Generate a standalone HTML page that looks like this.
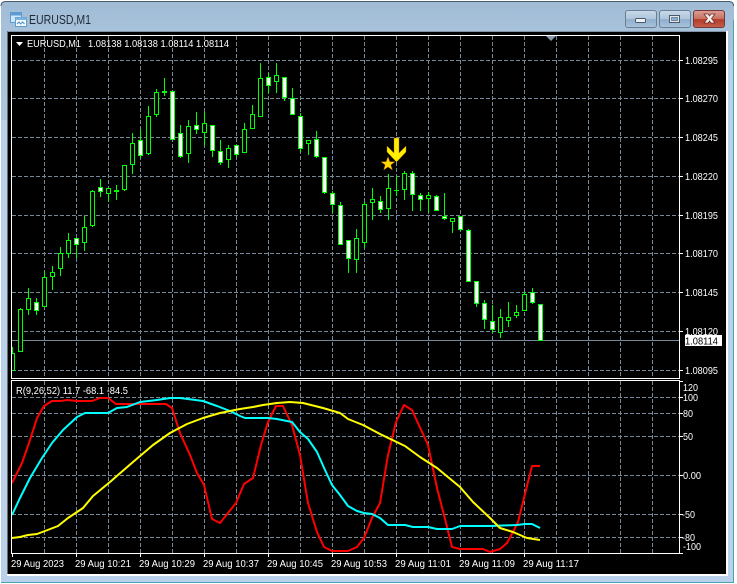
<!DOCTYPE html>
<html><head><meta charset="utf-8"><style>
html,body{margin:0;padding:0;background:#fff;width:737px;height:584px;overflow:hidden}
svg{display:block}
text{font-family:"Liberation Sans",sans-serif;font-size:10.500px;fill:#fff}
</style></head><body>
<svg width="737" height="584" viewBox="0 0 737 584" xmlns="http://www.w3.org/2000/svg">
<defs>
<linearGradient id="tb" x1="0" y1="0" x2="0" y2="1"><stop offset="0" stop-color="#a0bbd5"/><stop offset=".06" stop-color="#a9c3dc"/><stop offset="1" stop-color="#bad2ea"/></linearGradient>
<linearGradient id="b1" x1="0" y1="0" x2="0" y2="1"><stop offset="0" stop-color="#c9d9e9"/><stop offset=".5" stop-color="#aec5dc"/><stop offset=".52" stop-color="#8daecd"/><stop offset="1" stop-color="#a9c4dd"/></linearGradient>
<linearGradient id="b2" x1="0" y1="0" x2="0" y2="1"><stop offset="0" stop-color="#dca095"/><stop offset=".5" stop-color="#c9705f"/><stop offset=".52" stop-color="#b23a28"/><stop offset="1" stop-color="#c5604c"/></linearGradient>
<clipPath id="cm"><rect x="12" y="36" width="667" height="342"/></clipPath>
</defs>
<path d="M6 1H729Q734 1 734 6V583H1V6Q1 1 6 1Z" fill="url(#tb)"/>
<path d="M1 6Q1 1.500 6 1.500H729Q733.500 1.500 733.500 6" fill="none" stroke="#4a5a66"/>
<path d="M1 120H7V582H1ZM728 60H733.500V582H728ZM1 576H733.500V582H1Z" fill="#b9d1ea"/>
<path d="M1 582.500H733.500V20" fill="none" stroke="#4f9fb5"/>
<rect x="7" y="31" width="721" height="545" fill="#fff"/>
<rect x="7" y="31" width="719" height="1.500" fill="#8494a4"/>
<rect x="7" y="31" width="1" height="543" fill="#6a6a6a"/>
<rect x="8" y="32" width="718" height="542" fill="#000"/>

<!-- title icon -->
<rect x="10.500" y="12.500" width="11" height="10" fill="#cfe6f8" stroke="#5d9bd0"/>
<rect x="10.500" y="12.500" width="11" height="3" fill="#5d9bd0"/>
<rect x="15.500" y="17.500" width="11" height="9" fill="#f3fafe" stroke="#5d9bd0"/>
<rect x="15.500" y="17.500" width="11" height="2.500" fill="#7fb4de"/>
<path d="M17 24l2-2 1.500 2 2-2 2 2" fill="none" stroke="#4d8cc4"/>
<text x="29" y="24" style="font-size:12.500px;fill:#1e2a35" textLength="62" lengthAdjust="spacingAndGlyphs">EURUSD,M1</text>

<!-- window buttons -->
<rect x="625.500" y="10.500" width="31" height="17" rx="2.500" fill="url(#b1)" stroke="#6a7f94"/>
<rect x="659.500" y="10.500" width="31" height="17" rx="2.500" fill="url(#b1)" stroke="#6a7f94"/>
<rect x="693.500" y="10.500" width="31" height="17" rx="2.500" fill="url(#b2)" stroke="#6e3a3a"/>
<rect x="635.500" y="18.500" width="10" height="4" rx="1" fill="#eef2f6" stroke="#4a5a6a"/>
<rect x="669.500" y="15.500" width="10" height="7" fill="#dfe7ef" stroke="#4a5a6a"/>
<rect x="671.500" y="17.500" width="6" height="3" fill="#8daecd" stroke="#4a5a6a" stroke-width=".6"/>
<path d="M704 14H708L709.500 16 711 14H715L711.500 18.500 715 23H711L709.500 21 708 23H704L707.500 18.500Z" fill="#f4f0ee" stroke="#6a2a24" stroke-width=".7"/>

<!-- grid main -->
<g stroke="#778899" stroke-width="1" fill="none">
<path stroke-dasharray="4 2" d="M12 60.500H679M12 98.500H679M12 137.500H679M12 176.500H679M12 215.500H679M12 253.500H679M12 292.500H679M12 331.500H679M12 370.500H679"/>
<path stroke-dasharray="4 2" d="M44.500 36V378M76.500 36V378M108.500 36V378M140.500 36V378M172.500 36V378M204.500 36V378M236.500 36V378M268.500 36V378M300.500 36V378M332.500 36V378M364.500 36V378M396.500 36V378M428.500 36V378M460.500 36V378M492.500 36V378M524.500 36V378M556.500 36V378M588.500 36V378M620.500 36V378M652.500 36V378"/>
<path d="M12 340.500H679"/>
<path stroke-dasharray="4 2" d="M12 397.500H679M12 413.500H679M12 436.500H679M12 475.500H679M12 514.500H679M12 537.500H679"/>
<path stroke-dasharray="4 2" d="M44.500 381V553M76.500 381V553M108.500 381V553M140.500 381V553M172.500 381V553M204.500 381V553M236.500 381V553M268.500 381V553M300.500 381V553M332.500 381V553M364.500 381V553M396.500 381V553M428.500 381V553M460.500 381V553M492.500 381V553M524.500 381V553M556.500 381V553M588.500 381V553M620.500 381V553M652.500 381V553"/>
</g>

<!-- candles -->
<g clip-path="url(#cm)">
<path fill="none" stroke="#0f0" d="M12.500 347V370M20.500 308V351M28.500 288V315M36.500 298V315M44.500 271V306M52.500 266V290M60.500 247V276M68.500 233V258M76.500 238V258M84.500 216V251M92.500 190V227M100.500 179V197M108.500 188V202M116.500 185V200M124.500 165V191M132.500 133V174M140.500 129V158M148.500 106V155M156.500 89V117M164.500 78V96M180.500 125V158M188.500 120V163M196.500 112V134M204.500 112V146M212.500 125V157M220.500 140V165M228.500 145V168M236.500 145V157M244.500 123V152M252.500 105V128M260.500 63V116M268.500 73V93M276.500 63V93M284.500 77V101M292.500 88V114M300.500 113V152M308.500 140V155M316.500 131V158M324.500 157V194M332.500 191V213M340.500 202V244M348.500 240V273M356.500 229V273M364.500 202V248M372.500 188V220M380.500 196V213M388.500 174V220M396.500 176V196M404.500 171V200M412.500 171V211M420.500 193V211M428.500 192V213M436.500 195V210M444.500 193V220M452.500 218V233M460.500 216V231M468.500 229V281M476.500 281V307M484.500 300V329M492.500 305V333M500.500 309V338M508.500 302V327M516.500 305V318M524.500 292V310M532.500 288V304"/>
<path fill="#000" stroke="#0f0" d="M10.500 353.500h4v17h-4zM18.500 309.500h4v42h-4zM26.500 298.500h4v11h-4zM42.500 277.500h4v29h-4zM50.500 272.500h4v4h-4zM58.500 253.500h4v15h-4zM66.500 240.500h4v13h-4zM82.500 227.500h4v15h-4zM90.500 191.500h4v34h-4zM106.500 188.500h4v5h-4zM122.500 165.500h4v24h-4zM130.500 143.500h4v21h-4zM146.500 116.500h4v37h-4zM154.500 92.500h4v22h-4zM186.500 126.500h4v27h-4zM202.500 123.500h4v9h-4zM226.500 148.500h4v11h-4zM242.500 129.500h4v23h-4zM250.500 114.500h4v14h-4zM258.500 78.500h4v38h-4zM274.500 75.500h4v6h-4zM306.500 140.500h4v3h-4zM354.500 238.500h4v21h-4zM362.500 204.500h4v38h-4zM370.500 199.500h4v3h-4zM386.500 188.500h4v20h-4zM402.500 173.500h4v16h-4zM426.500 195.500h4v3h-4zM450.500 218.500h4v3h-4zM498.500 317.500h4v15h-4zM506.500 317.500h4v3h-4zM514.500 312.500h4v3h-4zM522.500 294.500h4v16h-4z"/>
<path fill="#fff" stroke="#0f0" d="M34.500 302.500h4v8h-4zM74.500 238.500h4v6h-4zM98.500 187.500h4v4h-4zM138.500 140.500h4v15h-4zM170.500 91.500h4v48h-4zM178.500 133.500h4v23h-4zM194.500 125.500h4v4h-4zM210.500 125.500h4v25h-4zM218.500 151.500h4v11h-4zM234.500 145.500h4v9h-4zM266.500 77.500h4v8h-4zM282.500 77.500h4v20h-4zM290.500 98.500h4v16h-4zM298.500 116.500h4v32h-4zM314.500 139.500h4v17h-4zM322.500 157.500h4v35h-4zM330.500 193.500h4v11h-4zM338.500 205.500h4v39h-4zM346.500 240.500h4v18h-4zM378.500 201.500h4v8h-4zM410.500 173.500h4v21h-4zM418.500 195.500h4v4h-4zM434.500 196.500h4v14h-4zM442.500 216.500h4v2h-4zM458.500 216.500h4v13h-4zM466.500 230.500h4v51h-4zM474.500 281.500h4v22h-4zM482.500 303.500h4v16h-4zM490.500 321.500h4v8h-4zM530.500 292.500h4v10h-4zM538.500 304.500h4v36h-4z"/>
<path fill="#0f0" d="M114 190h5v2h-5zM162 91h5v2h-5zM394 190h5v1h-5z"/>
</g>

<!-- arrow + star -->
<polygon points="394,138 399,138 399,153 406,146 406,152 396.500,162 387,152 387,146 394,153" fill="#ffee00" stroke="#b06a00" stroke-width=".4"/>
<polygon points="388,156.500 389.800,161.600 395.100,161.700 390.900,164.900 392.400,170.100 388,167 383.600,170.100 385.100,164.900 380.900,161.700 386.200,161.600" fill="#ffd800" stroke="#a04000" stroke-width=".4"/>

<!-- indicator lines -->
<g fill="none" stroke-width="2" stroke-linejoin="round">
<polyline stroke="#f00" points="12,483 22,463 30,440 37,418 44,406 52,401 60,401 68,400 77,401 92,401 100,398 108,398 116,404 132,404 148,404 166,404 172,408 180,433 190,455 197,473 204,485 212,519 220,523 228,513 236,503 244,484 253,478 261,445 268,422 276,406 283,406 292,425 300,455 308,503 317,532 324,547 332,551 348,551 357,547 364,538 372,518 380,503 388,455 396,422 404,405 412,410 428,445 437,488 444,515 452,547 460,549 483,549 490,552 500,549 507,543 513,532 518,522 523,502 532,466 540,466"/>
<polyline stroke="#0ff" points="12,515 20,498 30,478 42,458 52,443 63,430 77,417 85,413 108,413 117,408 127,407 140,402 157,400 170,398 180,398 203,401 217,406 230,411 240,416 245,418 268,418 277,419 292,422 300,432 308,439 317,452 325,470 332,485 340,495 348,506 357,511 364,513 372,514 380,518 388,525 405,525 413,527 428,527 437,529 452,529 460,526 490,526 517,525 525,524 532,524 540,528"/>
<polyline stroke="#ff0" points="12,538 20,537 28,535 37,534 45,531 58,526 68,518 83,508 93,496 110,482 133,462 153,445 170,433 187,424 203,418 220,413 240,409 253,407 263,405 277,403 290,402 303,403 323,408 340,413 348,419 363,425 380,434 405,446 420,457 437,468 460,487 473,502 490,518 500,528 513,532 527,538 540,540"/>
</g>

<!-- borders -->
<g fill="none" stroke="#fff" stroke-width="1">
<path d="M11.500 378.500V35.500H679.500V378.500H11.500Z"/>
<path d="M11.500 553.500V380.500H679.500V553.500H11.500Z"/>
<path d="M680 60.500h3M680 98.500h3M680 137.500h3M680 176.500h3M680 215.500h3M680 253.500h3M680 292.500h3M680 331.500h3M680 370.500h3"/>
<path d="M680 381.500h3M680 397.500h3M680 413.500h3M680 436.500h3M680 475.500h3M680 514.500h3M680 537.500h3M680 553.500h3"/>
<path d="M12.500 554v3M76.500 554v3M140.500 554v3M204.500 554v3M268.500 554v3M332.500 554v3M396.500 554v3M460.500 554v3M524.500 554v3"/>
</g>
<polygon points="546,36 556,36 551,41" fill="#8a9aaa"/>
<polygon points="16,42 23,42 19.500,46" fill="#fff"/>

<!-- texts -->
<text x="27" y="47" textLength="54" lengthAdjust="spacingAndGlyphs">EURUSD,M1</text>
<text x="88" y="47" textLength="141" lengthAdjust="spacingAndGlyphs">1.08138 1.08138 1.08114 1.08114</text>
<text x="685" y="64" textLength="33" lengthAdjust="spacingAndGlyphs">1.08295</text>
<text x="685" y="102" textLength="33" lengthAdjust="spacingAndGlyphs">1.08270</text>
<text x="685" y="141" textLength="33" lengthAdjust="spacingAndGlyphs">1.08245</text>
<text x="685" y="180" textLength="33" lengthAdjust="spacingAndGlyphs">1.08220</text>
<text x="685" y="219" textLength="33" lengthAdjust="spacingAndGlyphs">1.08195</text>
<text x="685" y="257" textLength="33" lengthAdjust="spacingAndGlyphs">1.08170</text>
<text x="685" y="296" textLength="33" lengthAdjust="spacingAndGlyphs">1.08145</text>
<text x="685" y="335" textLength="33" lengthAdjust="spacingAndGlyphs">1.08120</text>
<text x="685" y="374" textLength="33" lengthAdjust="spacingAndGlyphs">1.08095</text>
<rect x="685" y="335" width="37" height="11" fill="#fff"/>
<text x="685" y="344.500" textLength="33" lengthAdjust="spacingAndGlyphs" style="fill:#000">1.08114</text>

<text x="16" y="394" textLength="112" lengthAdjust="spacingAndGlyphs">R(9,26,52) 11.7 -68.1 -84.5</text>
<text x="683" y="391" textLength="15" lengthAdjust="spacingAndGlyphs">120</text>
<text x="683" y="401" textLength="15" lengthAdjust="spacingAndGlyphs">100</text>
<text x="683" y="417" textLength="10" lengthAdjust="spacingAndGlyphs">80</text>
<text x="683" y="440" textLength="10" lengthAdjust="spacingAndGlyphs">50</text>
<text x="683" y="479" textLength="18" lengthAdjust="spacingAndGlyphs">0.00</text>
<text x="682" y="518" textLength="13" lengthAdjust="spacingAndGlyphs">-50</text>
<text x="682" y="541" textLength="13" lengthAdjust="spacingAndGlyphs">-80</text>
<text x="683" y="550" textLength="18" lengthAdjust="spacingAndGlyphs">-100</text>

<text x="11" y="567" textLength="53" lengthAdjust="spacingAndGlyphs">29 Aug 2023</text>
<text x="75" y="567" textLength="56" lengthAdjust="spacingAndGlyphs">29 Aug 10:21</text>
<text x="139" y="567" textLength="56" lengthAdjust="spacingAndGlyphs">29 Aug 10:29</text>
<text x="203" y="567" textLength="56" lengthAdjust="spacingAndGlyphs">29 Aug 10:37</text>
<text x="267" y="567" textLength="56" lengthAdjust="spacingAndGlyphs">29 Aug 10:45</text>
<text x="331" y="567" textLength="56" lengthAdjust="spacingAndGlyphs">29 Aug 10:53</text>
<text x="395" y="567" textLength="56" lengthAdjust="spacingAndGlyphs">29 Aug 11:01</text>
<text x="459" y="567" textLength="56" lengthAdjust="spacingAndGlyphs">29 Aug 11:09</text>
<text x="523" y="567" textLength="56" lengthAdjust="spacingAndGlyphs">29 Aug 11:17</text>
</svg>
</body></html>
